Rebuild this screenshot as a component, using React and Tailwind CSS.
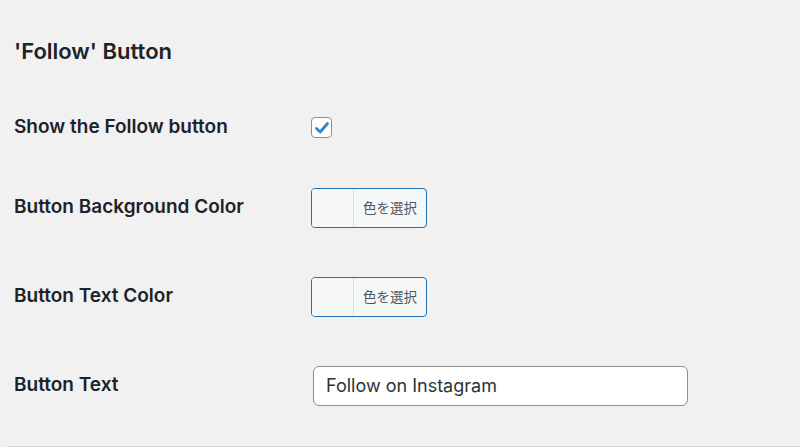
import React from "react";

function ColorButton() {
  return (
    <div className="flex h-[40px] w-[116px] overflow-hidden rounded-[4px] border border-[#2271b1] bg-[#f6f7f7]">
      <div className="w-[42px] shrink-0 border-r border-[#dcdcde] bg-[#f6f7f7]" />
      <div className="flex flex-1 items-center justify-center text-[13.5px] text-[#50575e]" style={{ fontFamily: '"Noto Sans CJK JP", sans-serif' }}>
        色を選択
      </div>
    </div>
  );
}

function Row({ h, label, children }) {
  return (
    <div className={`flex items-center ${h}`}>
      <div className="w-[297px] shrink-0 text-[19px] font-semibold text-[#1d2327]">{label}</div>
      <div className="flex items-center">{children}</div>
    </div>
  );
}

export default function App() {
  return (
    <div className="h-[447px] w-[800px] overflow-hidden bg-[#f1f1f1]" style={{ fontFamily: 'Inter, "Noto Sans", sans-serif' }}>
      <div className="pl-[14px]">
        <div className="flex h-[92px] items-start pt-[37px]">
          <h2 className="text-[22px] font-semibold leading-[28px] text-[#1d2327]">'Follow' Button</h2>
        </div>
        <Row h="h-[71px]" label="Show the Follow button">
          <div className="flex h-[21px] w-[21px] items-center justify-center rounded-[4px] border border-[#8c8f94] bg-white">
            <svg width="16" height="16" viewBox="0 0 16 16">
              <path d="M2.5 8.5 L6.2 12 L13.5 3.5" fill="none" stroke="#3582c4" strokeWidth="2.8" strokeLinecap="round" strokeLinejoin="round" />
            </svg>
          </div>
        </Row>
        <Row h="h-[89px]" label="Button Background Color">
          <ColorButton />
        </Row>
        <Row h="h-[89px]" label="Button Text Color">
          <ColorButton />
        </Row>
        <Row h="h-[89px]" label="Button Text">
          <div className="ml-[2px] flex h-[40px] w-[375px] items-center rounded-[6px] border border-[#8c8f94] bg-white px-[12px] text-[18px] text-[#2c3338]">
            Follow on Instagram
          </div>
        </Row>
      </div>
      <div className="ml-[8px] mt-[16px] h-[1px] bg-[#d5d5d5]" />
    </div>
  );
}
